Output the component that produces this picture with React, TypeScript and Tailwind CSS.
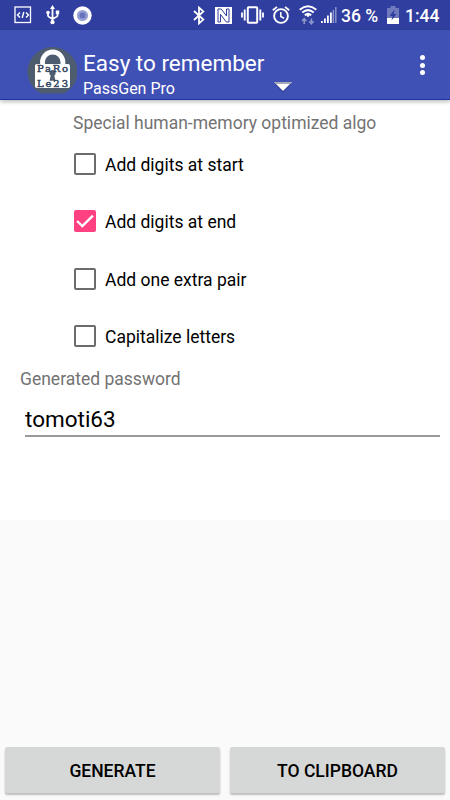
import { useState } from 'react'
import clsx from 'clsx'

const OPTIONS = [
  { id: 'start', label: 'Add digits at start' },
  { id: 'end', label: 'Add digits at end' },
  { id: 'pair', label: 'Add one extra pair' },
  { id: 'caps', label: 'Capitalize letters' }
]

function StatusBar() {
  return (
    <div className="flex h-[30px] shrink-0 items-center bg-[#303f9f] text-white">
      <svg className="ml-[14px] h-[18px] w-[18px]" viewBox="0 0 18 18" fill="none" stroke="currentColor">
        <rect x="1" y="1" width="15.5" height="15.5" strokeWidth="1.3" />
        <path d="M6 6.5 3.5 9 6 11.5M12 6.5 14.5 9 12 11.5M9.8 6 8.2 12" strokeWidth="1.4" />
      </svg>
      <svg className="ml-[14px] h-5 w-[14px]" viewBox="0 0 14 20" fill="none" stroke="currentColor" strokeWidth="1.8">
        <path d="M6.5 3v14M2 8v2.6q0 1.4 4.5 3.4M11.5 7.5v3.1q0 1.4-5 3.2" />
        <path d="M6.5 0 9 4H4z" fill="currentColor" stroke="none" />
        <circle cx="2" cy="7.5" r="1.8" fill="currentColor" stroke="none" />
        <path d="M9.8 5.5h3.4v3.6H9.8z" fill="currentColor" stroke="none" />
        <circle cx="6.5" cy="17.2" r="2.1" fill="currentColor" stroke="none" />
      </svg>
      <svg className="ml-[13px] h-[19px] w-[19px]" viewBox="0 0 19 19">
        <circle cx="9.5" cy="9.5" r="9.2" fill="#fff" />
        <circle cx="9.5" cy="9.5" r="5.6" fill="#97a0d2" />
        <circle cx="9.5" cy="9.5" r="3" fill="#6672bd" />
      </svg>
      <div className="grow" />
      <svg className="h-[19px] w-3" viewBox="0 0 12 19" fill="none" stroke="currentColor" strokeWidth="1.8">
        <path d="m1 5 9.3 8.6L6 17.4V1.6l4.3 3.8L1 14" />
      </svg>
      <svg className="ml-[10px] h-[17px] w-[17px]" viewBox="0 0 17 17">
        <path d="M0 0h17v17H0z" fill="#fff" />
        <path d="M5.5 15H3V2h3.2l5.3 7V2H14v13h-2.7L5.5 7.4z" fill="none" stroke="#303f9f" strokeWidth="1" />
      </svg>
      <svg className="ml-[9px] h-[18px] w-[23px]" viewBox="0 0 23 18" fill="none" stroke="currentColor">
        <rect x="6.8" y="1.3" width="9.4" height="15.4" rx=".8" strokeWidth="2" />
        <path d="M3.7 3.5v11M19.3 3.5v11" strokeWidth="1.9" />
        <path d="M1 6.5v5M22 6.5v5" strokeWidth="1.8" />
      </svg>
      <svg className="ml-[8px] h-[18px] w-[18px]" viewBox="0 0 18 18" fill="none" stroke="currentColor">
        <circle cx="9" cy="10" r="6.9" strokeWidth="1.9" />
        <path d="M.8 4.3 5 .9M17.2 4.3 13 .9" strokeWidth="1.8" />
        <path d="M8.8 6v4.5l3.3 1.8" strokeWidth="1.5" />
      </svg>
      <svg className="ml-[9px] h-5 w-[18px]" viewBox="0 0 18 20" fill="none" stroke="currentColor" strokeWidth="2">
        <path d="M.7 4.7Q9-2.2 17.3 4.7M3.3 7.5Q9 2.8 14.7 7.5M5.8 10.2Q9 7.5 12.2 10.2" />
        <path d="m7.2 10.4 1.8 1.8 1.8-1.8q-1.8-1.3-3.6 0" fill="currentColor" stroke="none" />
        <path d="M5.2 19v-5M3 16l2.2-2.4L7.4 16M12.4 13.5v5M10.2 16.3l2.2 2.4 2.2-2.4" stroke="#8d96cc" strokeWidth="1.6" />
      </svg>
      <svg className="ml-1 h-[17px] w-4" viewBox="0 0 16 17" fill="#fff">
        <path d="M0 14h1.8v2H0zM3 11.5h1.8V16H3zM6 8.5h1.8V16H6zM9 5.5h1.8V16H9z" />
        <path d="M11.6 3h1.5v13h-1.5zM14.1 0h1.4v16h-1.4z" fill="#8d96cc" />
      </svg>
      <span className="ml-1 w-[39px] whitespace-nowrap pt-px text-[17.5px] font-medium leading-[30px]">36 %</span>
      <svg className="ml-[7px] h-[18px] w-3" viewBox="0 0 12 18">
        <path d="M3.5 0h5v2H12v16H0V2h3.5z" fill="#6f79be" />
        <path d="M0 12h12v6H0z" fill="#fff" />
        <path d="M7.5 3.5 2.5 10h3L4.5 14.5 9.5 8H6.8z" fill="#303f9f" />
      </svg>
      <span className="ml-[6px] mr-[8px] w-[37px] whitespace-nowrap pt-px text-[17.5px] font-medium leading-[30px]">1:44</span>
    </div>
  )
}

function AppLogo() {
  return (
    <svg className="h-12 w-[50px]" viewBox="0 0 50 48">
      <path d="M14 47.5A25 24.6 0 1 1 37 47.5Z" fill="#4e5c70" />
      <path d="M15.5 20V16a10.2 10 0 0 1 20.4 0v4" fill="none" stroke="#fff" strokeWidth="4.8" />
      <rect x="8" y="18" width="35" height="24" rx="2" fill="#fff" />
      <path d="M25.5 24a3.2 3.2 0 0 1 1.8 5.8l1.2 5h-6l1.2-5A3.2 3.2 0 0 1 25.5 24" fill="#4e5c70" />
      <g fill="#34465e" stroke="#34465e" strokeWidth="0.5" fontFamily="'DejaVu Serif', serif" fontSize="10">
        <text x="10" y="26.3" textLength="31">PaRo</text>
        <text x="10" y="41.3" textLength="31">Le23</text>
      </g>
    </svg>
  )
}

function AppBar() {
  return (
    <header className="relative z-10 flex h-[70px] shrink-0 border-b border-[#1c32a5] bg-[#3f51b5] pl-[27px] text-white shadow-[0_2px_4px_rgba(0,0,0,0.25)]">
      <div className="pt-4">
        <AppLogo />
      </div>
      <div className="ml-[6px] w-[210px] pt-[19px]">
        <h1 className="whitespace-nowrap text-[22.5px] leading-[28px]">Easy to remember</h1>
        <div className="flex items-start justify-between">
          <p className="text-[16px] leading-[23px]">PassGen Pro</p>
          <svg className="mt-[4px] h-3 w-5" viewBox="0 0 20 12">
            <path d="M1 2h18l-9 9.5z" fill="#2d3c91" />
            <path d="M1 1h18l-9 9z" fill="#fff" />
            <path d="M1 1h18l-2 2H3z" fill="#a7a8b5" />
          </svg>
        </div>
      </div>
      <button className="ml-auto mr-[24px] flex w-[7px] flex-col items-center gap-[2.5px] pt-[25px]" aria-label="More">
        <span className="h-[5px] w-[5px] rounded-full bg-white" />
        <span className="h-[5px] w-[5px] rounded-full bg-white" />
        <span className="h-[5px] w-[5px] rounded-full bg-white" />
      </button>
    </header>
  )
}

export default function App() {
  const [checked, setChecked] = useState<string[]>(['end'])
  const [password, setPassword] = useState('tomoti63')

  const toggle = (id: string) => {
    setChecked(prev => (prev.includes(id) ? prev.filter(x => x !== id) : [...prev, id]))
  }

  const generate = () => {
    const pairs = ['to', 'mo', 'ti', 'ra', 'ke', 'lu', 'sa', 'ni']
    const count = checked.includes('pair') ? 4 : 3
    let word = ''
    for (let i = 0; i < count; i++) word += pairs[Math.floor(Math.random() * pairs.length)]
    if (checked.includes('caps')) word = word[0].toUpperCase() + word.slice(1)
    const digits = () => String(10 + Math.floor(Math.random() * 90))
    if (checked.includes('start')) word = digits() + word
    if (checked.includes('end')) word += digits()
    setPassword(word)
  }

  return (
    <div className="flex h-[800px] w-[450px] flex-col overflow-hidden bg-[#fafafa] font-['Roboto',sans-serif]">
      <StatusBar />
      <AppBar />
      <main className="h-[420px] shrink-0 bg-white">
        <p className="ml-[73px] pt-[12px] text-[17.5px] leading-[22px] text-[#737373]">Special human-memory optimized algo</p>
        <div className="ml-[74px] mt-[1px] flex flex-col">
          {OPTIONS.map(o => {
            const on = checked.includes(o.id)
            return (
              <button key={o.id} onClick={() => toggle(o.id)} className="flex h-[57.5px] items-center text-left">
                <span
                  className={clsx(
                    'flex h-[22px] w-[22px] items-center justify-center rounded-[2px]',
                    on ? 'bg-[#ff4081]' : 'border-2 border-[#6c6c6c]'
                  )}
                >
                  {on && (
                    <svg className="h-[22px] w-[22px]" viewBox="0 0 23 23" fill="none" stroke="#fff" strokeWidth="2.5">
                      <path d="m3.2 11.5 5.5 5.3L19.8 5.8" />
                    </svg>
                  )}
                </span>
                <span className="ml-[9px] pt-[2px] text-[17.5px] leading-[22px] text-black">{o.label}</span>
              </button>
            )
          })}
        </div>
        <p className="ml-5 mt-[3px] text-[17.5px] leading-[22px] text-[#737373]">Generated password</p>
        <input
          value={password}
          onChange={e => setPassword(e.target.value)}
          className="ml-[25px] mt-[11px] block h-[36px] w-[415px] border-b-2 border-[#999] pt-[2px] text-[22.5px] text-black outline-none"
        />
      </main>
      <div className="mb-[7px] mt-auto flex gap-[10px] px-[5px] text-[17.5px] font-medium text-black">
        <button
          onClick={generate}
          className="h-[46px] flex-1 rounded-[2px] bg-[#d6d7d7] pt-[2px] shadow-[0_2px_2px_rgba(0,0,0,0.25)]"
        >
          GENERATE
        </button>
        <button
          onClick={() => navigator.clipboard?.writeText(password)}
          className="h-[46px] flex-1 rounded-[2px] bg-[#d6d7d7] pt-[2px] shadow-[0_2px_2px_rgba(0,0,0,0.25)]"
        >
          TO CLIPBOARD
        </button>
      </div>
    </div>
  )
}
